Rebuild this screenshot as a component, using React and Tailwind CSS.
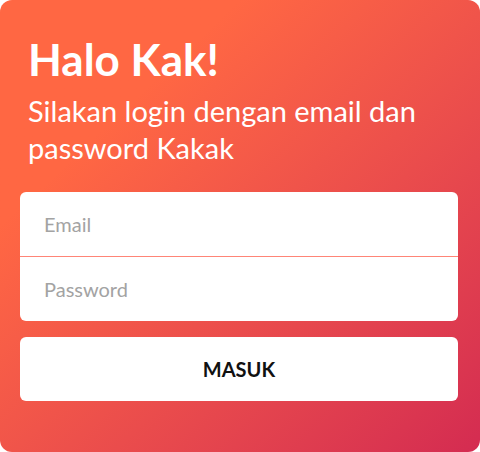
import React from 'react'

const App = () => {
  return (
    <div className="w-[480px] h-[452px] rounded-[12px] bg-linear-to-br from-[#ff6743] from-25% to-[#d42b51] to-100% pt-[34px] pl-[20px] pr-[22px] font-['Lato',sans-serif]">
      {/* Greeting */}
      <div className="pl-[8px]">
        <h1 className="text-[44px] leading-[50px] font-bold text-white">Halo Kak!</h1>
        <p className="mt-[8px] text-[29px] leading-[37px] text-white">
          Silakan login dengan email dan password Kakak
        </p>
      </div>

      {/* Form */}
      <form className="mt-[26px]" onSubmit={(e) => e.preventDefault()}>
        <div className="bg-white rounded-[6px] overflow-hidden">
          <input
            type="email"
            placeholder="Email"
            className="block w-full h-[64px] px-6 text-[20px] text-gray-800 placeholder:text-[#a3a3a3] outline-none"
          />
          <div className="h-px bg-[#ff8577]" />
          <input
            type="password"
            placeholder="Password"
            className="block w-full h-[64px] px-6 text-[20px] text-gray-800 placeholder:text-[#a3a3a3] outline-none"
          />
        </div>

        <button
          type="submit"
          className="mt-[16px] w-full h-[64px] bg-white rounded-[6px] text-[20px] font-bold text-[#111]"
        >
          MASUK
        </button>
      </form>
    </div>
  )
}

export default App
